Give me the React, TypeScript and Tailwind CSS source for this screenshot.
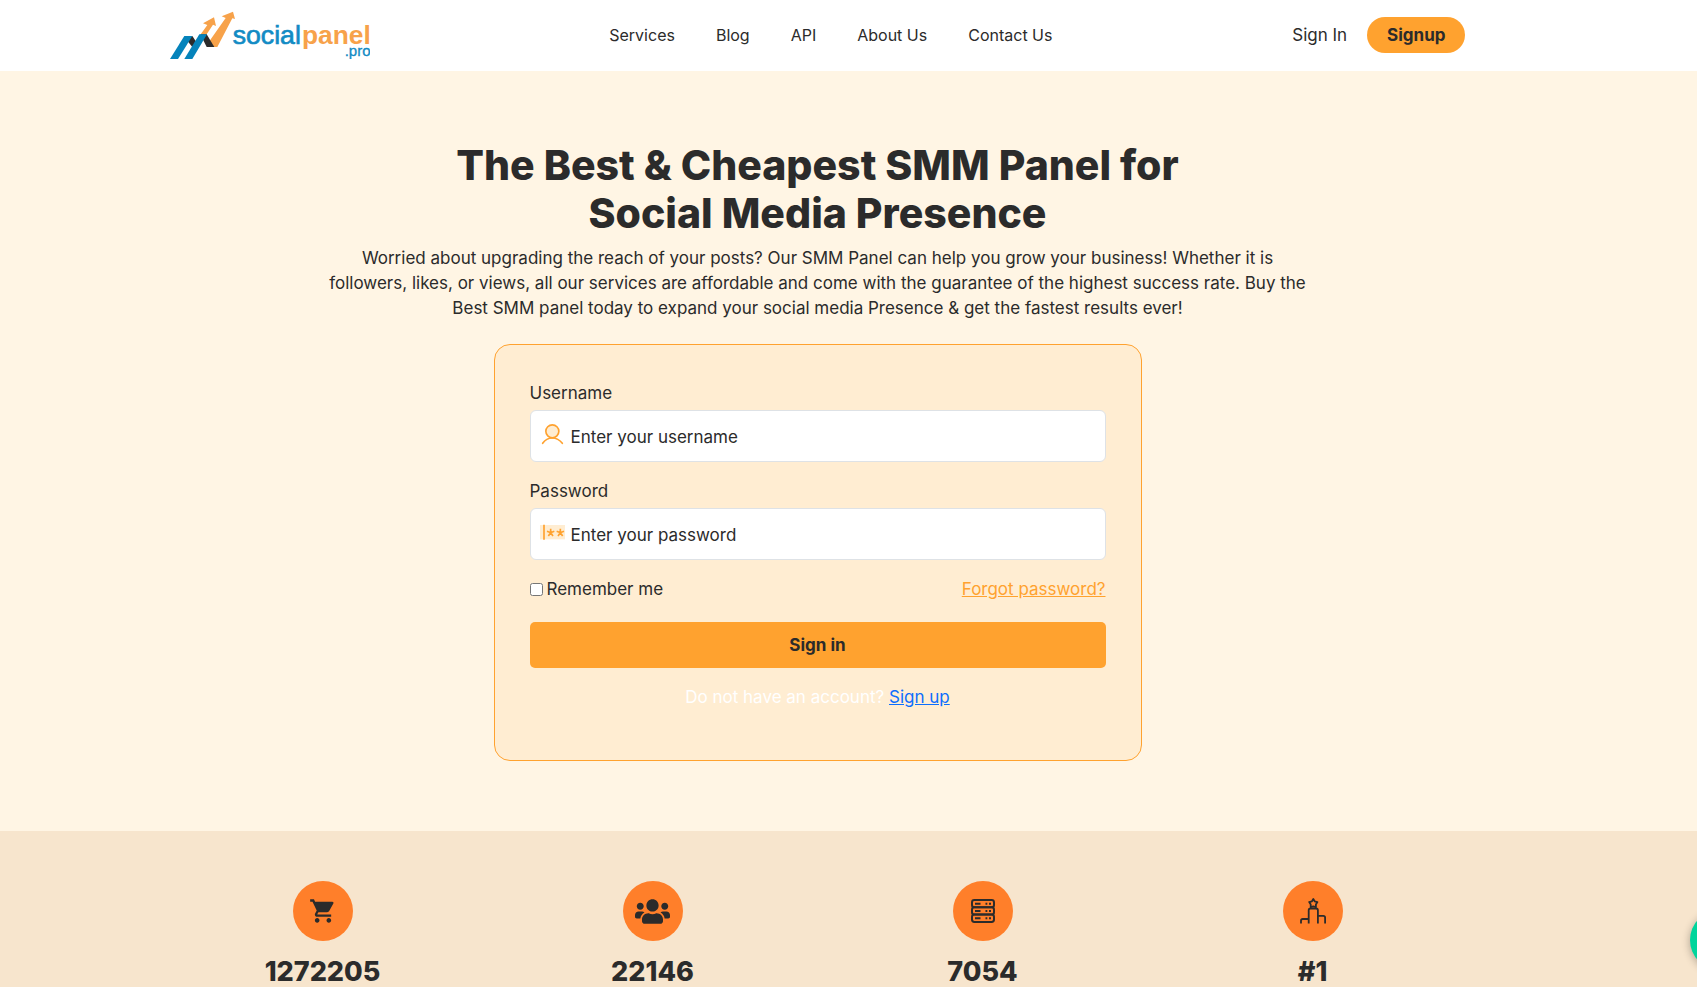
import type { ReactNode } from "react";
import { FaUsers } from "react-icons/fa";
import { MdShoppingCart } from "react-icons/md";

const NAV_ITEMS = [
  { href: "#services", label: "Services" },
  { href: "#blog", label: "Blog" },
  { href: "#api", label: "API" },
  { href: "#about", label: "About Us" },
  { href: "#contact", label: "Contact Us" },
];

const STATS = [
  { value: "1272205", icon: <MdShoppingCart size={28} /> },
  { value: "22146", icon: <FaUsers size={35} /> },
  { value: "7054", icon: <ServerIcon /> },
  { value: "#1", icon: <PodiumIcon /> },
];

function Logo() {
  return (
    <svg viewBox="15 15 600 144" className="h-12 w-[200px]" role="img" aria-label="socialpanel.pro">
      <g fill="#f7a24a">
        <path d="M107 85L127 57L114 52L147 34L153 60L144 56L125 85Z" />
        <path d="M133 106L182 36L170 31L204 17L210 39L202 37L157 123H143Z" />
      </g>
      <path d="M72 93L82 90L96 111L85 127L68 106Z" fill="#2b2b2b" />
      <path d="M106 85H125L148 123H125Z" fill="#2b2b2b" />
      <g fill="#0583bb">
        <path d="M15 159L58 90H82L39 159Z" />
        <path d="M58 159L103 85H126L82 159Z" />
      </g>
      <g fontFamily="Liberation Sans, Arial, sans-serif">
        <text x="203" y="113" fontSize="80" fill="#118bc4" stroke="#118bc4" strokeWidth="2">social</text>
        <text x="411" y="113" fontSize="79" fontWeight="700" fill="#f7a24a">panel</text>
        <text x="539" y="149" fontSize="45" fill="#118bc4" stroke="#118bc4">.pro</text>
      </g>
    </svg>
  );
}

function UserIcon() {
  return (
    <svg viewBox="0 0 75 75" className="size-[25px] shrink-0" aria-hidden="true">
      <g stroke="#ffa22f" strokeWidth="5" strokeLinecap="round">
        <circle cx="37" cy="22" r="19.5" fill="#ffedd2" />
        <path d="M8 58C14 49 23 42 37 42C51 42 60 49 67 58" fill="none" />
      </g>
    </svg>
  );
}

function PasswordIcon() {
  return (
    <svg viewBox="0 0 75 75" className="size-[25px] shrink-0" aria-hidden="true">
      <rect y="9" width="75" height="43" fill="#ffedd2" />
      <path
        d="M12 8V53M32 20V32M21 28L32 32L43 28M25 42L32 32L39 42M61 20V32M50 28L61 32L72 28M54 42L61 32L68 42"
        fill="none"
        stroke="#ffa22f"
        strokeWidth="5"
      />
    </svg>
  );
}

function ServerIcon() {
  return (
    <svg viewBox="0 0 24 24" className="size-6" fill="none" stroke="#2b2b2b" strokeWidth="2" aria-hidden="true">
      <rect x="1" y="1" width="22" height="7.3" rx="2.4" />
      <rect x="1" y="8.3" width="22" height="7.3" rx="2.4" />
      <rect x="1" y="15.6" width="22" height="7.3" rx="2.4" />
      <path d="M4 4.7H9.5M14.5 4.7H16.3M18 4.7H20M4 12H9.5M14.5 12H16.3M18 12H20M4 19.3H9.5M14.5 19.3H16.3M18 19.3H20" />
    </svg>
  );
}

function PodiumIcon() {
  return (
    <svg viewBox="0 0 26 26" className="size-[26px]" fill="none" stroke="#2b2b2b" strokeWidth="1.8" aria-hidden="true">
      <path d="M1 25.5V22.8Q1 21 2.8 21H8.7M8.7 25.5V12.3Q8.7 10.5 10.5 10.5H16.1Q17.9 10.5 17.9 12.3V25.5M17.9 17.8H23.3Q25.1 17.8 25.1 19.6V25.5" />
      <path d="M13.3 1L14.8 3.4L17.4 4.1L15.9 6.4L15.9 9.2L13.3 8.4L10.7 9.2L10.7 6.4L9.2 4.1L11.8 3.4Z" strokeLinejoin="round" />
    </svg>
  );
}

function Field({
  id,
  label,
  type,
  placeholder,
  icon,
}: {
  id: string;
  label: string;
  type: string;
  placeholder: string;
  icon: ReactNode;
}) {
  return (
    <div className="mb-4">
      <label htmlFor={id} className="mb-1 block">
        {label}
      </label>
      <div className="flex h-[52px] items-center gap-[6px] rounded-md border border-[#dee2e6] bg-white pl-[9px]">
        {icon}
        <input
          id={id}
          type={type}
          placeholder={placeholder}
          className="h-full min-w-0 flex-1 bg-transparent pt-[2px] outline-none placeholder:text-[#2b2b2b]"
        />
      </div>
    </div>
  );
}

export default function App() {
  return (
    <div className="min-h-screen overflow-x-hidden bg-[#f7e5cd] font-['Inter','Open_Sans',sans-serif] text-[17px] leading-[26px] text-[#2b2b2b]">
      <header className="bg-white pr-[62px]">
        <div className="mx-auto flex h-[71px] max-w-[1320px] items-center justify-between px-3 pb-[2px]">
          <a href="#home">
            <Logo />
          </a>
          <nav className="flex gap-[41px]">
            {NAV_ITEMS.map(({ href, label }) => (
              <a key={label} href={href} className="text-[16px]">
                {label}
              </a>
            ))}
          </nav>
          <div className="flex items-center gap-5">
            <a href="#signin">Sign In</a>
            <a href="#signup" className="rounded-full bg-[#ffa22f] px-5 py-[5px] font-bold">
              Signup
            </a>
          </div>
        </div>
      </header>

      <main>
        <section className="bg-[#fff5e4] py-[70px] pr-[62px]">
          <div className="mx-auto max-w-[1000px] text-center">
            <h1 className="text-[41px] leading-[48px] font-extrabold">
              The Best &amp; Cheapest SMM Panel for
              <br />
              Social Media Presence
            </h1>
            <p className="mt-[9px] leading-[25px]">
              Worried about upgrading the reach of your posts? Our SMM Panel can help you grow your business! Whether it is
              <br />
              followers, likes, or views, all our services are affordable and come with the guarantee of the highest success rate. Buy the
              <br />
              Best SMM panel today to expand your social media Presence &amp; get the fastest results ever!
            </p>
          </div>

          <form className="mx-auto mt-[23px] max-w-[648px] rounded-2xl border border-[#ffa22f] bg-[#ffedd2] px-[35px] pt-[35px] pb-[50px]">
            <Field id="username" label="Username" type="text" placeholder="Enter your username" icon={<UserIcon />} />
            <Field id="password" label="Password" type="password" placeholder="Enter your password" icon={<PasswordIcon />} />
            <div className="flex items-center justify-between">
              <label htmlFor="remember" className="flex items-center gap-1">
                <input id="remember" type="checkbox" className="size-[13px]" />
                Remember me
              </label>
              <a href="#forgot" className="text-[#ffa22f] underline">
                Forgot password?
              </a>
            </div>
            <button type="button" className="mt-5 h-[46px] w-full rounded-[5px] bg-[#ffa22f] font-bold">
              Sign in
            </button>
            <p className="mt-4 text-center text-white">
              Do not have an account?{" "}
              <a href="#signup" className="text-[#0d6efd] underline">
                Sign up
              </a>
            </p>
          </form>
        </section>

        <section className="pt-[50px] pr-[62px]">
          <div className="mx-auto grid max-w-[1320px] grid-cols-4">
            {STATS.map(({ value, icon }) => (
              <div key={value} className="flex flex-col items-center gap-[14px]">
                <div className="flex size-[60px] items-center justify-center rounded-full bg-[#ff7f2a]">{icon}</div>
                <p className="text-[27px] leading-[34px] font-extrabold">{value}</p>
              </div>
            ))}
          </div>
        </section>
      </main>

      <button
        type="button"
        aria-label="Open chat"
        className="fixed -right-[53px] bottom-[17px] size-[60px] rounded-full bg-[#00d59c] shadow-[0_2px_8px_rgba(0,0,0,0.3)]"
      />
    </div>
  );
}
